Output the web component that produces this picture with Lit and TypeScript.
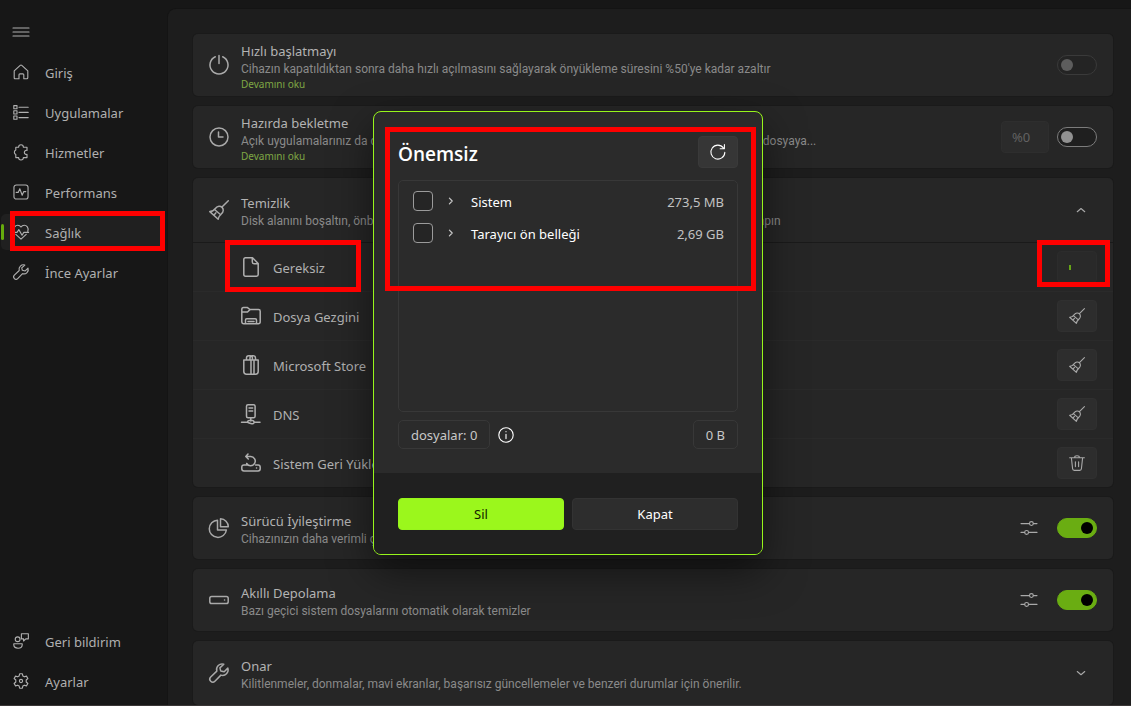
import { LitElement, html, css, svg, nothing } from "lit";
import { customElement, property } from "lit/decorators.js";

const icons: Record<string, unknown> = {
  menu: svg`<path d="M0 5h20M0 10h20M0 15h20"/>`,
  home: svg`<path d="M1.500 8.500 9 1.700q1-.9 2 0l7.500 6.800v8.800q0 1.200-1.200 1.200h-3.800v-5q0-1.200-1.200-1.200H8.700q-1.200 0-1.200 1.200v5H2.700q-1.200 0-1.200-1.200z"/>`,
  apps: svg`<path d="M1 2h4v4H1zM1 8.500h4v4H1zM1 15h4v4H1zM7.500 4H19M7.500 10.500H19M7.500 17H19"/>`,
  puzzle: svg`<path d="M3.500 4H7a3 3 0 0 1 6 0h4.500v4a2.600 2.600 0 1 0 0 5v4H13a3 3 0 0 1-6 0H3.500v-4a3 3 0 0 1 0-5.500z"/>`,
  perf: svg`<rect x="1.200" y="1.200" width="17.600" height="17.600" rx="3"/><path d="M4 10.500h2.500L8.500 6l3 8 2-4.500H16"/>`,
  heart: svg`<path d="M1.500 9C0 4.500 3 1.500 6 1.500c2 0 3.200 1 4 2.300.8-1.300 2-2.300 4-2.300 3 0 6 3 4.500 7.500M3.500 13l6.500 6 6.500-6M.5 10.500H5L7.300 7l4 7 2.200-3.500h6"/>`,
  wrench: svg`<path d="M14.800 1.300a5.500 5.500 0 0 0-7 6.800L1.700 14a2.900 2.900 0 0 0 4.200 4.200l6-6.100a5.500 5.500 0 0 0 6.900-7l-3.600 3.600-3.500-.8-.8-3z"/>`,
  feedback: svg`<circle cx="5.800" cy="7.800" r="3"/><path d="M1 13.500h10.500v1.200c0 2.600-2.200 4.300-5.200 4.300S1 17.300 1 14.700zM10.500 1h8.700v6.300h-3.200L13.200 10V7.300h-2.700z"/>`,
  gear: svg`<path d="M8.300 1h3.400l.6 2.700 1.900 1.100 2.600-.9 1.800 3-2.100 1.900v2.400l2.100 1.900-1.800 3-2.600-.9-1.900 1.100-.6 2.700H8.300l-.6-2.700-1.900-1.100-2.600.9-1.800-3 2.100-1.900V8.800L1.400 6.900l1.800-3 2.600.9 1.900-1.100z"/><circle cx="10" cy="10" r="2"/>`,
  power: svg`<path d="M10 .5v8M6.300 1.700a9 9 0 1 0 7.400 0"/>`,
  clock: svg`<circle cx="10" cy="10" r="9"/><path d="M9.500 5v5h4.500"/>`,
  broom: svg`<path d="M19.300.7 13 7M.8 11.600C3 11.600 5 10.300 6.600 8.200 8.500 5.700 11.500 5.800 13.100 7.400c1.700 1.700 1.500 4.600-.6 6.300-2 1.700-3 3.500-3.300 5.500zM5.500 9.500l6.200 5.300M4.800 15.200l2-2.300"/>`,
  file: svg`<path d="M4 .8h7.500l5.700 5.700v11q0 1.700-1.700 1.700h-11q-1.700 0-1.700-1.700v-15q0-1.700 1.700-1.700M11.300 1v4q0 1.700 1.700 1.700h4"/>`,
  explorer: svg`<path d="M.8 15.500v-12Q.8 1.600 2.500 1.600h4L9 3.500h8.500q1.700 0 1.700 1.700v10.600q0 2-2 2H2.800q-2 0-2-2.300M1 6h5.500L9 3.600M4.500 17.500V14q0-1.200 1.200-1.200h8.600q1.200 0 1.200 1.200v3.500M7 15.500h6"/>`,
  store: svg`<path d="M2.800 5h14.400v11.500q0 2.700-2.700 2.700h-9q-2.700 0-2.700-2.700zM10 5v14M13 5v14M5.500 5V3q0-2.200 2.200-2.200h1.500q2.200 0 2.200 2.200v2M9 5V3q0-2.200 2.200-2.200h1Q14.500.8 14.500 3v2"/>`,
  dns: svg`<rect x="5.500" y=".8" width="8.600" height="13" rx="1.500"/><path d="M8 4h3.700M8 7h3.700M9.800 14v3M.5 18.300h6M13 18.300h6M6.500 18.300q0-2 3.300-2t3.300 2-3.300 1.200-3.300-1.200"/>`,
  restore: svg`<path d="M6 12H3q-2.200 0-2.200 2.200v1.600Q.8 18 3 18h14q2.200 0 2.200-2.200v-1.600Q19.200 12 17 12h-2.500M7 1 4.800 3.500 7.300 6M5 3.500h4.700a4.600 4.600 0 1 1-4 7M15.500 15h.1"/>`,
  pie: svg`<path d="M8.500 2.200A8.600 8.600 0 1 0 17.400 12H8.500zM11.500.8a8 8 0 0 1 7.800 8h-7.800z"/>`,
  drive: svg`<rect x=".8" y="6.500" width="18.400" height="7" rx="1.800"/><path d="M15.500 10h.1"/>`,
  trash: svg`<path d="M.8 3.500h18.400M7 3.300Q7 1 10 1t3 2.300M3 3.700l1.500 13.500q.2 2 2 2h7q1.800 0 2-2L17 3.700M8 8.500v6M12 8.500v6"/>`,
  sliders: svg`<path d="M0 4.500h10.500M15.500 4.500H20M0 15.500h4.500M9.500 15.500H20"/><circle cx="13" cy="4.500" r="2.400"/><circle cx="7" cy="15.500" r="2.400"/>`,
  refresh: svg`<path d="M18.500 10.500A8.700 8.700 0 1 1 16.800 5M18 .8V6h-5.300"/>`,
  info: svg`<circle cx="10" cy="10" r="9"/><path d="M10 9.200v5.300M10 5.600v.3"/>`,
  up: svg`<path d="M2.500 13.500 10 7l7.500 6.500"/>`,
  down: svg`<path d="M2.500 7l7.500 6.500L17.500 7"/>`,
  right: svg`<path d="M6 3l7 7-7 7"/>`,
};

const icon = (name: string, size: "s8" | "s10" | "s16" | "s20" = "s20") =>
  html`<svg class="icon ${size}" viewBox="0 0 20 20" aria-hidden="true">${icons[name]}</svg>`;

const shared = css`
  *, *::after, *::before { box-sizing: border-box; }
  .icon {
    display: block; flex: none; fill: none; stroke: currentColor; overflow: visible;
    stroke-linecap: round; stroke-linejoin: round;
  }
  .s8 { width: 8px; height: 8px; stroke-width: 3; }
  .s10 { width: 10px; height: 10px; stroke-width: 2.2; }
  .s16 { width: 16px; height: 16px; stroke-width: 1.4; }
  .s20 { width: 20px; height: 20px; stroke-width: 1.5; }
  button, input { font: inherit; color: inherit; margin: 0; }
  .marked { position: relative; }
  .marked::after {
    content: ""; position: absolute; z-index: 3; border: 5px solid #fe0000;
    pointer-events: none;
  }
`;

@customElement("side-nav")
class SideNav extends LitElement {
  static styles = [shared, css`
    :host { display: flex; flex-direction: column; justify-content: space-between; padding: 12px 4px 4px 0; color: #b0b0b0; }
    .menu { display: flex; align-items: center; height: 40px; padding: 0 13px; background: none; border: 0; }
    .list { display: flex; flex-direction: column; }
    .item {
      display: flex; align-items: center; gap: 16px; height: 36px; margin: 2px 0 2px 1px; padding: 0 12px;
      border-radius: 5px; color: inherit; text-decoration: none;
    }
    .label { padding-top: 2px; }
    .active { background: #202020; }
    .active::before {
      content: ""; position: absolute; left: 0; top: 10px; width: 3px; height: 16px;
      border-radius: 2px; background: #66ab0d;
    }
    .active::after { inset: -3px -1px -1px 9px; }
  `];
  render() {
    const item = (name: string, label: string, active = false) => html`
      <a class="item ${active ? "active marked" : ""}" href="#${name}" aria-current=${active ? "page" : nothing}>
        ${icon(name, "s16")}<span class="label">${label}</span>
      </a>`;
    return html`
      <nav class="list">
        <button class="menu" aria-label="Menü">${icon("menu", "s16")}</button>
        ${item("home", "Giriş")}
        ${item("apps", "Uygulamalar")}
        ${item("puzzle", "Hizmetler")}
        ${item("perf", "Performans")}
        ${item("heart", "Sağlık", true)}
        ${item("wrench", "İnce Ayarlar")}
      </nav>
      <nav class="list">
        ${item("feedback", "Geri bildirim")}
        ${item("gear", "Ayarlar")}
      </nav>`;
  }
}

@customElement("setting-card")
class SettingCard extends LitElement {
  @property() icon = "";
  @property() heading = "";
  @property() text = "";
  @property({ type: Boolean }) more = false;
  static styles = [shared, css`
    :host { display: block; background: #262626; border-radius: 5px; box-shadow: 0 0 0 1px #1a1a1a; color: #a9a9a9; }
    .head { display: flex; align-items: center; gap: 12px; min-height: 62px; padding: 0 16px; }
    :host([expander]) .head { min-height: 64px; }
    .texts { flex: 1; min-width: 0; padding-top: 3px; }
    :host([more]) .texts { padding-top: 1px; }
    .title { margin: 0; font-size: 13px; line-height: 18px; font-weight: 400; color: #b3b3b3; }
    .desc {
      margin: 0; font-family: Roboto, "Noto Sans", sans-serif; font-size: 12px; line-height: 18px;
      color: #8a8a8a; overflow: hidden; text-overflow: ellipsis; white-space: nowrap;
    }
    .more { display: block; font-size: 10px; line-height: 12px; color: #7fa644; text-decoration: none; }
    .actions { display: flex; align-items: center; gap: 8px; }
  `];
  render() {
    return html`
      <div class="head">
        ${icon(this.icon)}
        <div class="texts">
          <h2 class="title">${this.heading}</h2>
          <p class="desc">${this.text}</p>
          ${this.more ? html`<a class="more" href="#more">Devamını oku</a>` : nothing}
        </div>
        <div class="actions"><slot></slot></div>
      </div>
      <slot name="rows"></slot>`;
  }
}

@customElement("junk-dialog")
class JunkDialog extends LitElement {
  static styles = [shared, css`
    :host { display: block; width: 390px; max-width: 100%; color: #fff; }
    .dialog {
      border: 1px solid #97f51b; border-radius: 8px; background: #2b2b2b; overflow: hidden;
      box-shadow: 0 16px 40px rgba(0, 0, 0, .5);
    }
    .body { padding: 24px; }
    .top { display: flex; justify-content: space-between; align-items: center; height: 32px; margin-bottom: 12px; }
    .title { margin: 0; padding-top: 4px; font-family: "Open Sans", "Noto Sans", sans-serif; font-size: 19px; line-height: 28px; font-weight: 600; }
    .refresh {
      display: grid; place-items: center; width: 40px; height: 32px; padding: 0;
      border: 1px solid #3a3a3a; border-radius: 4px; background: #363636;
    }
    .list { height: 232px; margin: 0; padding: 4px 13px 0 14px; list-style: none; border: 1px solid #383838; border-radius: 5px; }
    .row { display: flex; align-items: center; height: 32px; }
    .check { appearance: none; width: 20px; height: 20px; border: 1px solid #9b9b9b; border-radius: 4px; background: #252525; }
    .chev { display: grid; place-items: center; width: 38px; height: 20px; padding: 0 2px 0 0; border: 0; background: none; color: #c8c8c8; }
    .name { flex: 1; padding-top: 2px; }
    .size { padding-top: 2px; color: #c2c2c2; }
    .sum { display: flex; align-items: center; gap: 8px; margin-top: 8px; color: #c8c8c8; }
    .pill { height: 29px; padding: 2px 12px 0; line-height: 25px; border: 1px solid #383838; border-radius: 5px; }
    .grow { flex: 1; color: #fff; }
    .foot { display: grid; grid-template-columns: 1fr 1fr; gap: 8px; padding: 25px 24px 24px; background: #202020; }
    .btn { height: 32px; padding: 0; border: 1px solid #333; border-radius: 4px; background: #2d2d2d; }
    .primary { border-color: #97f51b; background: #9bf71c; color: #132000; }
    .marked::after { inset: 15px 6px auto 11px; height: 164px; }
  `];
  render() {
    const row = (id: string, name: string, size: string) => html`
      <li class="row">
        <input class="check" type="checkbox" id=${id} />
        <button class="chev" aria-label="Genişlet">${icon("right", "s8")}</button>
        <label class="name" for=${id}>${name}</label>
        <span class="size">${size}</span>
      </li>`;
    return html`
      <div class="dialog marked" role="dialog" aria-labelledby="title">
        <div class="body">
          <div class="top">
            <h1 class="title" id="title">Önemsiz</h1>
            <button class="refresh" aria-label="Yenile">${icon("refresh", "s16")}</button>
          </div>
          <ul class="list">
            ${row("sys", "Sistem", "273,5 MB")}
            ${row("cache", "Tarayıcı ön belleği", "2,69 GB")}
          </ul>
          <div class="sum">
            <span class="pill">dosyalar: 0</span>
            <span class="grow">${icon("info", "s16")}</span>
            <span class="pill">0 B</span>
          </div>
        </div>
        <div class="foot">
          <button class="btn primary">Sil</button>
          <button class="btn">Kapat</button>
        </div>
      </div>`;
  }
}

@customElement("app-root")
class AppRoot extends LitElement {
  static styles = [shared, css`
    :host {
      display: block; position: relative; box-sizing: border-box; height: 100vh; overflow: hidden;
      background: #171717; border-bottom: 1px solid #3a3636;
      font: 13px/20px "Noto Sans", "Open Sans", sans-serif;
    }
    .shell { display: grid; grid-template-columns: 168px minmax(0, 1fr); height: 100%; }
    .main {
      display: flex; flex-direction: column; gap: 10px; margin-top: 9px; padding: 25px 18px 0 25px;
      background: #1d1d1d; border-radius: 8px 0 0; box-shadow: 0 0 0 1px #141414; overflow: hidden;
    }
    setting-card { flex: none; }
    .toggle {
      appearance: none; display: flex; align-items: center; width: 40px; height: 20px; padding: 0 3px;
      border: 1px solid #7c7c7c; border-radius: 10px; background: #1f1f1f;
    }
    .toggle::before { content: ""; width: 12px; height: 12px; border-radius: 50%; background: #919191; }
    .toggle:disabled { border-color: #3a3a3a; background: #242424; }
    .toggle:disabled::before { background: #5d5d5d; }
    .toggle:checked { justify-content: flex-end; border-color: #6aad12; background: #6aad12; }
    .toggle:checked::before { background: #000; }
    .percent {
      width: 48px; height: 32px; padding: 0 10px; border: 1px solid #2e2e2e; border-radius: 4px;
      background: #2b2b2b; color: #626262;
    }
    .flat { display: grid; place-items: center; width: 40px; height: 32px; padding: 0; border: 0; background: none; }
    .chev { width: 32px; }
    .row { display: flex; align-items: center; justify-content: space-between; height: 49px; padding: 0 16px 0 48px; border-top: 1px solid #2a2a2a; }
    .row:first-child { border-top-color: #1a1a1a; }
    .what { display: flex; align-items: center; gap: 12px; color: #b0b0b0; }
    .label { padding-top: 2px; }
    .act {
      display: grid; place-items: center; width: 40px; height: 32px; padding: 0;
      border: 1px solid #303030; border-radius: 4px; background: #2d2d2d;
    }
    .busy { justify-items: start; padding-left: 11px; background: #292929; border-color: #2c2c2c; }
    .tick { width: 2px; height: 5px; background: #66a516; }
    .what.marked::after { inset: -16px -36px -14px -16px; }
    .act.marked::after { inset: -12px -14px -5px -21px; }
    .overlay { position: absolute; inset: 0; display: grid; place-items: center; padding: 0 0 39px 5px; }
  `];
  render() {
    const toggle = (label: string, on = false, off = false) =>
      html`<input class="toggle" type="checkbox" role="switch" aria-label=${label} .checked=${on} ?disabled=${off} />`;
    const row = (name: string, label: string, act: string, marked = false) => html`
      <div class="row">
        <span class="what ${marked ? "marked" : ""}">${icon(name)}<span class="label">${label}</span></span>
        ${marked
          ? html`<button class="act busy marked" aria-label=${label}><span class="tick"></span></button>`
          : html`<button class="act" aria-label=${label}>${icon(act, "s16")}</button>`}
      </div>`;
    return html`
      <div class="shell">
        <side-nav></side-nav>
        <main class="main">
          <setting-card icon="power" heading="Hızlı başlatmayı" more
            text="Cihazın kapatıldıktan sonra daha hızlı açılmasını sağlayarak önyükleme süresini %50'ye kadar azaltır">
            ${toggle("Hızlı başlatmayı", false, true)}
          </setting-card>
          <setting-card icon="clock" heading="Hazırda bekletme" more
            text="Açık uygulamalarınız da dahil olmak üzere oturumunuzu kaydedip bilgisayarınızı tamamen kapatır, dosyaya...">
            <input class="percent" aria-label="Yüzde" value="%0" />
            ${toggle("Hazırda bekletme")}
          </setting-card>
          <setting-card icon="broom" heading="Temizlik" expander
            text="Disk alanını boşaltın, önbelleği temizleyin ve gereksiz dosyaları kaldırarak düzenli olarak temizlik yapın">
            <button class="flat chev" aria-label="Daralt">${icon("up", "s10")}</button>
            <div slot="rows">
              ${row("file", "Gereksiz", "broom", true)}
              ${row("explorer", "Dosya Gezgini", "broom")}
              ${row("store", "Microsoft Store", "broom")}
              ${row("dns", "DNS", "broom")}
              ${row("restore", "Sistem Geri Yükleme", "trash")}
            </div>
          </setting-card>
          <setting-card icon="pie" heading="Sürücü İyileştirme" text="Cihazınızın daha verimli çalışmasını sağlar">
            <button class="flat" aria-label="Seçenekler">${icon("sliders", "s16")}</button>
            ${toggle("Sürücü İyileştirme", true)}
          </setting-card>
          <setting-card icon="drive" heading="Akıllı Depolama" text="Bazı geçici sistem dosyalarını otomatik olarak temizler">
            <button class="flat" aria-label="Seçenekler">${icon("sliders", "s16")}</button>
            ${toggle("Akıllı Depolama", true)}
          </setting-card>
          <setting-card icon="wrench" heading="Onar" expander
            text="Kilitlenmeler, donmalar, mavi ekranlar, başarısız güncellemeler ve benzeri durumlar için önerilir.">
            <button class="flat chev" aria-label="Genişlet">${icon("down", "s10")}</button>
          </setting-card>
        </main>
      </div>
      <div class="overlay"><junk-dialog></junk-dialog></div>`;
  }
}
